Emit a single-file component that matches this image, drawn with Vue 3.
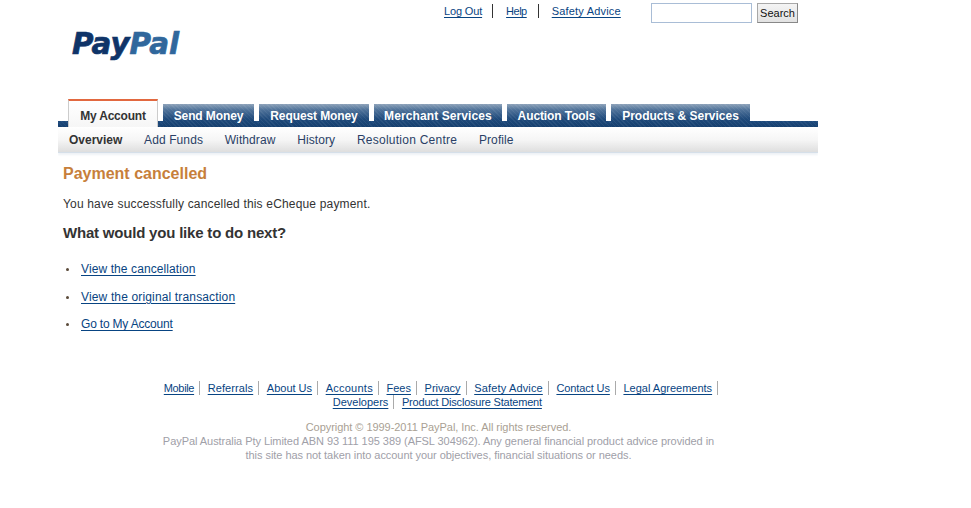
<script setup>
const tabs = [
  { label: 'Send Money', width: 91 },
  { label: 'Request Money', width: 110 },
  { label: 'Merchant Services', width: 128 },
  { label: 'Auction Tools', width: 99 },
  { label: 'Products & Services', width: 139 }
]
const subs = ['Add Funds', 'Withdraw', 'History', 'Resolution Centre', 'Profile']
const links = ['View the cancellation', 'View the original transaction', 'Go to My Account']
const foot1 = ['Mobile', 'Referrals', 'About Us', 'Accounts', 'Fees', 'Privacy', 'Safety Advice', 'Contact Us', 'Legal Agreements']
const foot2 = ['Developers', 'Product Disclosure Statement']
</script>

<template>
  <div class="page">
    <header class="head">
      <div class="logo"><span class="pay">Pay</span><span class="pal">Pal</span></div>
      <nav class="util">
        <a href="#">Log Out</a>
        <a href="#">Help</a>
        <a href="#">Safety Advice</a>
      </nav>
      <form class="search" @submit.prevent>
        <input class="box" type="text" aria-label="Search" />
        <button class="btn">Search</button>
      </form>
    </header>

    <nav class="tabs">
      <a class="tab active" href="#">My Account</a>
      <a v-for="t in tabs" :key="t.label" class="tab" :style="{ width: t.width + 'px' }" href="#">{{ t.label }}</a>
    </nav>
    <nav class="subnav">
      <a class="cur" href="#">Overview</a>
      <a v-for="s in subs" :key="s" href="#">{{ s }}</a>
    </nav>

    <main class="main">
      <h1>Payment cancelled</h1>
      <p>You have successfully cancelled this eCheque payment.</p>
      <h2>What would you like to do next?</h2>
      <ul>
        <li v-for="l in links" :key="l"><a href="#">{{ l }}</a></li>
      </ul>
    </main>

    <footer class="foot">
      <div class="row first"><a v-for="f in foot1" :key="f" href="#">{{ f }}</a></div>
      <div class="row second"><a v-for="f in foot2" :key="f" href="#">{{ f }}</a></div>
      <p class="copy">Copyright © 1999-2011 PayPal, Inc. All rights reserved.</p>
      <p class="legal">PayPal Australia Pty Limited ABN 93 111 195 389 (AFSL 304962). Any general financial product advice provided in<br />this site has not taken into account your objectives, financial situations or needs.</p>
    </footer>
  </div>
</template>

<style>
body { margin: 0; background: #fff; }
</style>

<style scoped>
.page {
  width: 760px;
  margin-left: 58px;
  height: 508px;
  overflow: hidden;
  font-family: "Liberation Sans", Arial, sans-serif;
  font-size: 12px;
  color: #333;
}
a { color: #084482; text-underline-offset: 2px; }

.head { position: relative; height: 99px; }
.logo {
  position: absolute;
  left: 14px;
  top: 27px;
  font-family: "DejaVu Sans", sans-serif;
  font-size: 29.3px;
  line-height: 34px;
  font-weight: 700;
  font-style: italic;
  white-space: nowrap;
  -webkit-text-stroke: .7px currentColor;
}
.pay { color: #0f3468; }
.pal { color: #30679c; }
.util {
  position: absolute;
  left: 386px;
  top: 4px;
  display: flex;
  font-size: 11px;
  line-height: 14px;
}
.util a { padding-right: 10px; margin-right: 13px; border-right: 1px solid #333; letter-spacing: -.15px; }
.util a:nth-child(2) { padding-right: 11px; letter-spacing: -.5px; }
.util a:last-child { border: 0; margin: 0; padding: 0; letter-spacing: .19px; }
.search { position: absolute; left: 593px; top: 3px; display: flex; gap: 5px; }
.box {
  box-sizing: border-box;
  width: 101px;
  height: 20px;
  padding: 0;
  border: 1px solid #a9bdd6;
  background: #fff;
}
.btn {
  box-sizing: border-box;
  width: 41px;
  height: 20px;
  padding: 0;
  border: 1px solid #a8a8a8;
  border-bottom-color: #888;
  border-right-color: #888;
  background: linear-gradient(#f4f4f4, #e2e2e2);
  color: #111;
  font: 11px "Liberation Sans", Arial, sans-serif;
}

.tabs {
  height: 28px;
  padding-left: 10px;
  display: flex;
  align-items: flex-end;
  gap: 5px;
  box-sizing: border-box;
  background:
    repeating-linear-gradient(45deg, rgba(255,255,255,.05) 0 1px, transparent 1px 3px) left bottom / 100% 6px no-repeat,
    linear-gradient(#1d4a7d, #153f6f) left bottom / 100% 6px no-repeat;
}
.tab {
  box-sizing: border-box;
  height: 23px;
  padding-top: 5px;
  text-align: center;
  white-space: nowrap;
  line-height: 14px;
  font-size: 12px;
  font-weight: 700;
  letter-spacing: -.1px;
  text-decoration: none;
  color: #fff;
  background:
    repeating-linear-gradient(45deg, rgba(255,255,255,.06) 0 1px, transparent 1px 3px),
    linear-gradient(#8ea3ba 0, #50739a 25%, #1f4a7b 65%, #153f6f 100%);
}
.tab:nth-child(4) { letter-spacing: .1px; }
.tab:nth-child(6) { letter-spacing: 0; }
.tab.active {
  height: 28px;
  width: 90px;
  padding-top: 8px;
  color: #333;
  letter-spacing: -.2px;
  background: linear-gradient(#fff, #f6f6f6);
  border-top: 2px solid #e2683f;
  border-left: 1px solid #ccc;
  border-right: 1px solid #ccc;
}

.subnav {
  height: 25px;
  padding-left: 11px;
  display: flex;
  gap: 21.7px;
  align-items: flex-start;
  background: linear-gradient(#fff, #f6f6f6 50%, #dedede);
  border-bottom: 1px solid #d5dfe9;
  box-shadow: 0 2px 2px #eef2f6;
}
.subnav a {
  padding-top: 6px;
  line-height: 15px;
  letter-spacing: .1px;
  text-decoration: none;
  color: #2a3f66;
}
.subnav a:nth-child(5) { letter-spacing: .25px; }
.subnav a.cur { color: #333; font-weight: 700; letter-spacing: 0; }

.main { padding: 11px 0 0 5px; height: 228px; box-sizing: border-box; }
h1 {
  margin: 0;
  font-size: 16px;
  line-height: 20px;
  font-weight: 700;
  color: #c77f3b;
}
.main p { margin: 13px 0 0; line-height: 14px; letter-spacing: .17px; }
h2 {
  margin: 13px 0 0;
  font-size: 15px;
  line-height: 18px;
  font-weight: 700;
  letter-spacing: -.2px;
  color: #333;
}
ul { list-style: none; margin: 20px 0 0; padding: 0; }
li { position: relative; padding-left: 18px; height: 27.5px; line-height: 14px; letter-spacing: .1px; }
li:nth-child(2) { letter-spacing: .15px; }
li:last-child { letter-spacing: -.19px; }
li::before {
  content: "";
  position: absolute;
  left: 3px;
  top: 6px;
  width: 3px;
  height: 3px;
  border-radius: 50%;
  background: #5a4a3a;
}

.foot { width: 761px; text-align: center; font-size: 11px; }
.row {
  display: flex;
  justify-content: center;
  white-space: nowrap;
  height: 14px;
}
.row a { padding-right: 5px; margin-right: 7.6px; border-right: 1px solid #aaa; line-height: 14px; }
.row.first { margin-left: 12.5px; }
.row.first a:nth-child(1) { letter-spacing: -.35px; }
.row.first a:nth-child(2) { letter-spacing: .1px; }
.row.first a:nth-child(4) { letter-spacing: .25px; }
.row.first a:nth-child(7) { letter-spacing: .15px; }
.row.first a:nth-child(8) { letter-spacing: -.1px; }
.row.second { margin-right: 2.4px; }
.row.second a:last-child { border: 0; padding-right: 0; margin-right: 0; letter-spacing: -.2px; }
.copy, .legal { margin: 0; line-height: 14px; }
.copy { margin-top: 11px; color: #a99f94; letter-spacing: -.05px; }
.legal { color: #a0a0a8; letter-spacing: -.05px; }
</style>
